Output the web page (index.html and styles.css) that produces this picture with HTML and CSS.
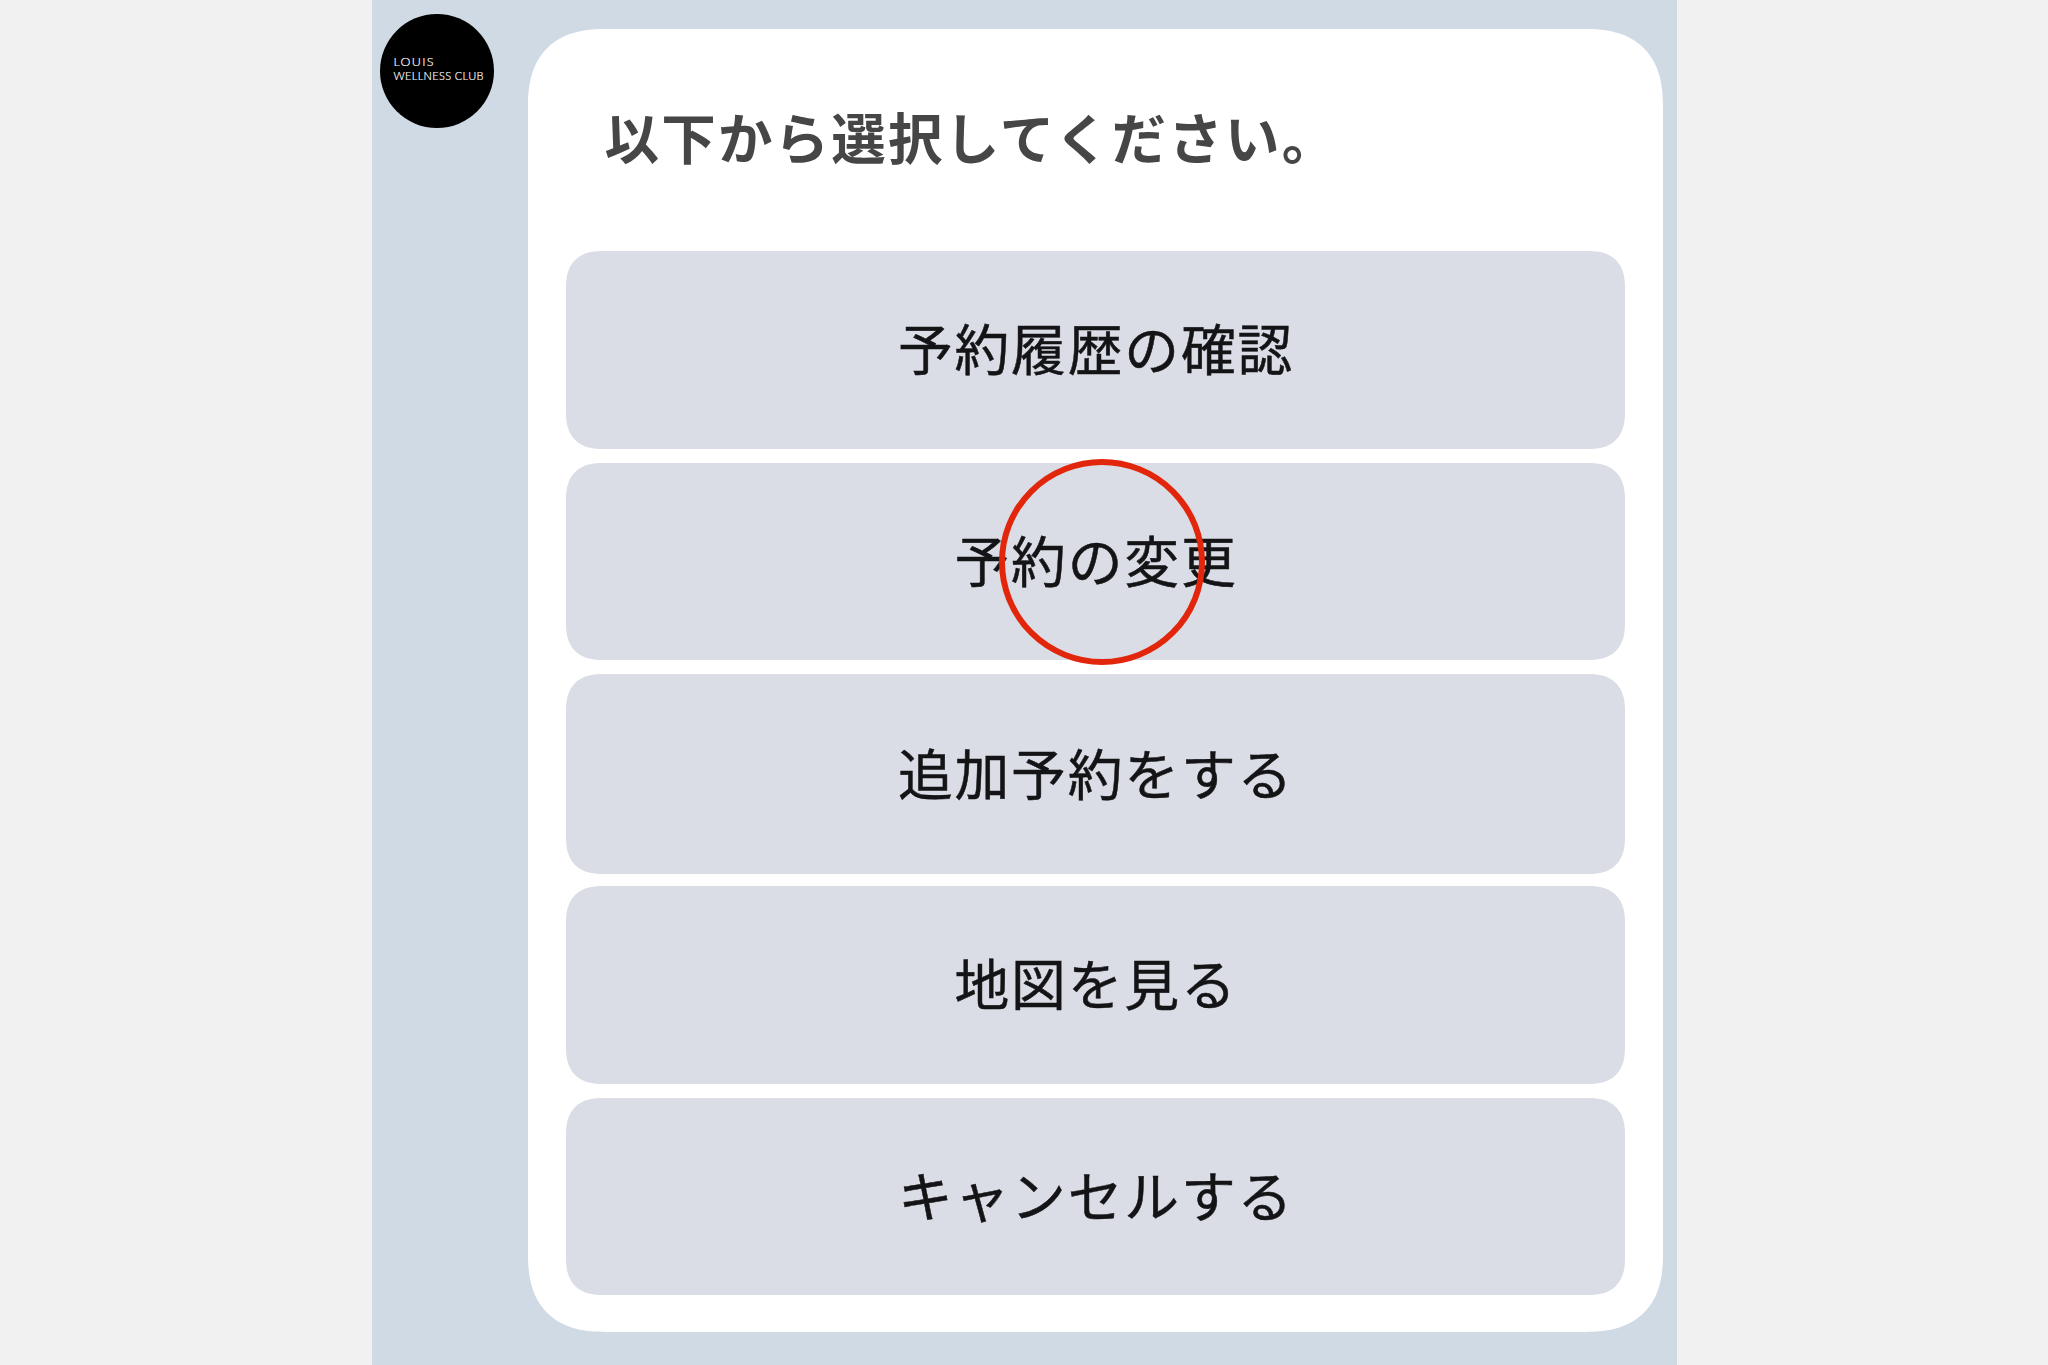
FILE: index.html
```
<!DOCTYPE html>
<html lang="ja">
<head>
    <meta charset="UTF-8">
    <meta name="viewport" content="width=device-width, initial-scale=1.0">
    <title>LOUIS WELLNESS CLUB</title>
    <link rel="stylesheet" href="styles.css">
</head>
<body>
    <main class="chat">
        <div class="avatar">
            <span class="avatar-name">LOUIS</span>
            <span class="avatar-sub">WELLNESS CLUB</span>
        </div>

        <section class="card">
            <h2>以下から選択してください。</h2>
            <div class="menu">
                <button type="button">予約履歴の確認</button>
                <button type="button" class="selected">予約の変更<span class="tap-ring"></span></button>
                <button type="button" class="tall">追加予約をする</button>
                <button type="button">地図を見る</button>
                <button type="button">キャンセルする</button>
            </div>
        </section>
    </main>
</body>
</html>
```
FILE: styles.css
```
:root {
    --page-bg: #f1f1f1;
    --chat-bg: #d0dae4;
    --button-bg: #dadde6;
    --text-color: #141416;
    --heading-color: #464646;
    --ring-color: #e2260b;
    --white: #ffffff;
}

* {
    margin: 0;
    padding: 0;
    box-sizing: border-box;
}

body {
    font-family: "Noto Sans CJK JP", sans-serif;
    background-color: var(--page-bg);
    color: var(--text-color);
    height: 100vh;
    overflow: hidden;
}

.chat {
    display: flex;
    align-items: flex-start;
    gap: 34px;
    width: 1304.5px;
    height: 100%;
    margin-left: 372px;
    padding: 13.5px 13.5px 33px 8px;
    background-color: var(--chat-bg);
}

.avatar {
    display: flex;
    flex-direction: column;
    flex-shrink: 0;
    width: 114px;
    height: 114px;
    padding: 41px 0 0 13.5px;
    border-radius: 50%;
    background-color: #000;
    color: #fff;
    font-family: Lato, sans-serif;
    font-weight: 300;
    white-space: nowrap;
    -webkit-text-stroke: 0.2px #fff;
}

.avatar-name {
    font-size: 12.5px;
    line-height: 14px;
    letter-spacing: 1.3px;
}

.avatar-sub {
    font-size: 11px;
    line-height: 14px;
    letter-spacing: 0.35px;
}

.card {
    flex: 1;
    height: 1303px;
    margin-top: 15.5px;
    padding: 0 38px 36px;
    border-radius: 64px;
    background-color: var(--white);
}

h2 {
    height: 222px;
    padding: 65px 0 0 38.5px;
    color: var(--heading-color);
    font-size: 54.5px;
    font-weight: 600;
    line-height: 84px;
    letter-spacing: 2.2px;
}

.menu {
    display: grid;
    grid-template-rows: repeat(5, 197.5px);
    gap: 14.2px;
}

button {
    height: 197.5px;
    padding: 0 0 7px 1px;
    border: none;
    border-radius: 30px;
    background-color: var(--button-bg);
    color: inherit;
    font-family: inherit;
    font-size: 54.8px;
    line-height: 1.5;
    letter-spacing: 1.8px;
    cursor: pointer;
    -webkit-text-stroke: 0.5px var(--text-color);
}

button.tall {
    height: 200px;
}

.selected {
    position: relative;
}

/* red tap marker over the label */
.tap-ring {
    position: absolute;
    top: -3.5px;
    left: 433px;
    width: 206px;
    height: 206px;
    border: 6.5px solid var(--ring-color);
    border-radius: 50%;
}

/* smoother corners where the browser can draw them */
@supports (corner-shape: superellipse(1.3)) {
    .card {
        border-radius: 78px;
        corner-shape: superellipse(1.3);
    }

    button {
        border-radius: 37px;
        corner-shape: superellipse(1.3);
    }
}
```
